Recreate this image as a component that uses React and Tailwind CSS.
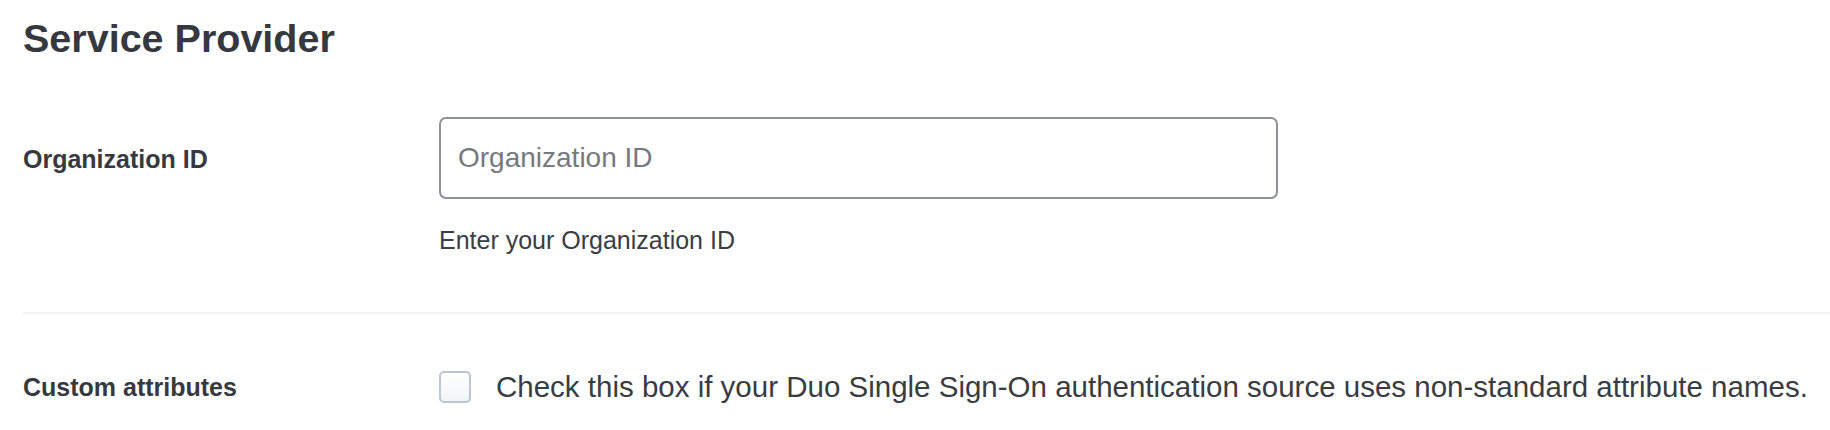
import React from 'react';

export default function App() {
  return (
    <div className="w-full min-h-[430px] bg-white font-['Liberation_Sans',Arial,sans-serif] text-[#36393f]">
      <div className="pl-[23px] pt-[14px]">
        {/* Titel */}
        <h2 className="text-[39.5px] leading-[48px] font-bold text-[#35383e]">Service Provider</h2>

        {/* Organization ID */}
        <div className="flex mt-[55px]">
          <div className="w-[416px] h-[82px] flex items-center shrink-0">
            <span className="text-[25px] font-bold leading-none pt-[3px]">Organization ID</span>
          </div>
          <div className="flex flex-col">
            <input
              type="text"
              placeholder="Organization ID"
              className="w-[839px] h-[82px] border-2 border-[#8e9197] rounded-[7px] px-[17px] text-[28px] text-[#36393f] placeholder:text-[#76797e] outline-none"
            />
            <p className="mt-[25px] text-[25px] leading-[33px] text-[#3a3d42]">Enter your Organization ID</p>
          </div>
        </div>

        <div className="mt-[55px] border-t-2 border-[#f2f2f2]" />

        {/* Custom attributes */}
        <div className="flex items-center mt-[56px]">
          <div className="w-[416px] shrink-0 pt-[3px]">
            <span className="text-[25px] font-bold leading-none">Custom attributes</span>
          </div>
          <label className="flex items-center gap-[25px]">
            <span className="w-[32px] h-[32px] shrink-0 rounded-[5px] border-2 border-[#bcc5d1] bg-gradient-to-b from-white to-[#f2f4f7]" />
            <span className="text-[29.5px] leading-[34px] text-[#393c42] whitespace-nowrap">
              Check this box if your Duo Single Sign-On authentication source uses non-standard attribute names.
            </span>
          </label>
        </div>
      </div>
    </div>
  );
}
